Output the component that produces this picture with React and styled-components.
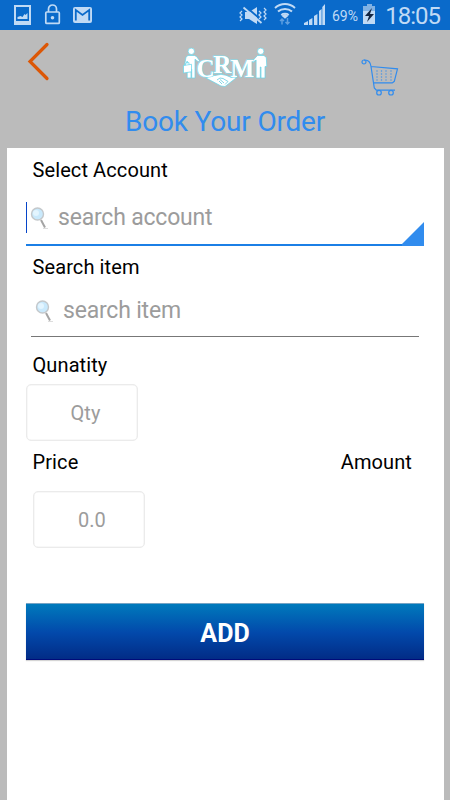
import React from 'react';
import styled, { createGlobalStyle } from 'styled-components';

const GlobalStyle = createGlobalStyle`
  * { box-sizing: border-box; }
  body { margin: 0; background: #bbbbbb; font-family: Roboto, sans-serif; }
`;

const Screen = styled.div`
  width: 450px;
  height: 800px;
  overflow: hidden;
  display: flex;
  flex-direction: column;
  background: #bbbbbb;
`;

const StatusBar = styled.div`
  height: 30px;
  flex: none;
  display: flex;
  justify-content: space-between;
  background: #0a6aca;
  color: #c0daf5;
`;

const StatusIcons = styled.svg`
  display: block;
  width: ${(p) => p.$width}px;
  height: 30px;
`;

const StatusGroup = styled.div`
  display: flex;
  align-items: flex-start;
  padding-right: 10px;
`;

const StatusText = styled.span`
  font-size: ${(p) => p.$size}px;
  line-height: 32px;
  width: ${(p) => p.$width}px;
  letter-spacing: ${(p) => p.$spacing || 0}px;
  white-space: nowrap;
`;

const ClockText = styled(StatusText)`
  text-align: right;
  line-height: 33px;
`;

const Header = styled.header`
  height: 75px;
  flex: none;
  display: flex;
  justify-content: space-between;
  padding: 10px 51px 0 26px;
`;

const HeaderIcon = styled.svg`
  display: block;
  flex: none;
  margin-top: ${(p) => p.$drop || 0}px;
  margin-left: ${(p) => p.$indent || 0}px;
`;

const Title = styled.h1`
  margin: 0;
  height: 43px;
  flex: none;
  font-size: 28px;
  line-height: 33px;
  font-weight: 400;
  text-align: center;
  color: #318cee;
  letter-spacing: -0.18px;
`;

const Panel = styled.main`
  flex: 1;
  margin: 0 6.5px 0 6.5px;
  padding: 10px 19.5px 0;
  background: #fff;
`;

const Label = styled.div`
  padding: 0 12px 0 6.5px;
  display: flex;
  justify-content: space-between;
  font-size: 20px;
  line-height: 24px;
  color: #000;
  letter-spacing: 0.1px;
`;

const SearchField = styled.div`
  position: relative;
  display: flex;
  height: ${(p) => p.$height}px;
  margin: ${(p) => p.$margin};
  border-bottom: ${(p) => (p.$active ? '2px solid #1b7fe6' : '1px solid #777')};
  font-size: 23px;
  line-height: 28px;
  letter-spacing: -0.2px;
  color: #9c9c9c;
`;

const Caret = styled.span`
  position: absolute;
  left: 0;
  top: -2px;
  width: 1px;
  height: 31px;
  background: #0645c9;
`;

const Corner = styled.span`
  position: absolute;
  right: 0;
  bottom: -2px;
  width: 22px;
  height: 24px;
  background: #318cee;
  clip-path: polygon(100% 0, 100% 100%, 0 100%, 0 92%);
`;

const Lens = styled.svg`
  flex: none;
  width: 20px;
  height: 25px;
  margin: 2px 8px 0 4px;
`;

const NumberBox = styled.div`
  width: 112px;
  height: 57px;
  margin: ${(p) => p.$margin};
  padding-left: 7px;
  border: 1.5px solid #ebebeb;
  box-shadow: inset 0 0 0 0.5px #f1f1f1;
  border-radius: 5px;
  font-size: 20px;
  line-height: 56px;
  text-align: center;
  color: #9c9c9c;
`;

const AddButton = styled.button`
  display: block;
  width: 398px;
  height: 57px;
  margin: 55px 0 0;
  padding: 2px 0 0;
  border: 0;
  border-top: 1px solid #75a3c5;
  border-bottom: 1px solid #000b7a;
  background: linear-gradient(#007abc, #0249ab 52%, #022c86);
  box-shadow: 0 1px 1px #d5d5d5;
  color: #fff;
  font: 700 25px/55px Roboto, sans-serif;
`;

function LeftStatus() {
  return (
    <StatusIcons $width={100} viewBox="0 0 100 30" fill="none" stroke="#c0daf5">
      <path d="M15 6h15v18H15z" strokeWidth="2" />
      <path d="M17.5 19v-2l3-1 2 1 2-3 1 1 2-2v6z" fill="#c0daf5" stroke="none" />
      <path d="M14 21h17v3H14z" fill="#c0daf5" stroke="none" />
      <rect x="45.8" y="12" width="13.5" height="11.4" rx="1" strokeWidth="1.7" />
      <path d="M48.5 12V9a4 4 0 0 1 8 0v3" strokeWidth="1.7" />
      <circle cx="52.5" cy="17.8" r="1.8" fill="#c0daf5" stroke="none" />
      <rect x="73" y="7" width="19" height="16" rx="2" fill="#c0daf5" stroke="none" />
      <path d="M75.8 20.5V10l6.7 5 6.7-5v10.5" stroke="#0a6aca" strokeWidth="1.8" />
    </StatusIcons>
  );
}

function RightStatus() {
  return (
    <StatusIcons $width={94} viewBox="238 0 94 30" fill="none" stroke="#c0daf5">
      <path d="M245 12h4l8-5v17l-8-5h-4z" fill="#c0daf5" stroke="none" />
      <path d="M245 6 263 21.5" stroke="#0a6aca" strokeWidth="2" />
      <path d="m243.5 7.5 18 15.5" strokeWidth="1.8" />
      <path d="m242 11-2 2 2 2-2 2 2 2-2 2M259 11l2 2-2 2 2 2-2 2M264 8l2 2-2 2 2 2-2 2 2 2-2 2" strokeWidth="1.2" />
      <path d="M275 8c6-5.2 14-5.2 20 0M278 11.6c4-3.5 10-3.5 14 0M281.3 15c2-1.6 5.4-1.6 7.4 0" strokeWidth="2" />
      <path d="m281.5 15.8 3.5-2 3.5 2-3.5 3z" fill="#c0daf5" stroke="none" />
      <path d="M282 24.5V19m-2 2 2-2 2 2M287.5 18v6m-2-2 2 2 2-2" stroke="#5e9fe1" strokeWidth="1.5" />
      <path d="M304 25v-2l4-2v4zM309 25v-5l3.4-2v7zM314 25v-9l3.4-2v11zM319 25V11l2.6-2v16zM322.3 25V7l2.7-3v21z" fill="#c0daf5" stroke="none" />
    </StatusIcons>
  );
}

function Battery() {
  return (
    <StatusIcons $width={15} viewBox="0 0 15 30">
      <path d="M5 4h5v2h3v18H1V6h4z" fill="#c0daf5" />
      <path d="M1 6h4V4h5v2h3v5H1z" fill="#81b2e4" />
      <path d="m10 8-7 8h4l-2 6 7-8H8z" fill="#142642" />
    </StatusIcons>
  );
}

const LogoText = styled.text`
  font: 700 25px "Liberation Serif", serif;
  fill: #fff;
  stroke: #7edff0;
  stroke-width: 1.2px;
  paint-order: stroke;
`;

function Logo() {
  return (
    <HeaderIcon $drop={7} $indent={36} width="86" height="41" viewBox="0 0 86 41">
      <g fill="#fff" stroke="#62d5eb" strokeWidth="0.7" strokeLinejoin="round">
        <circle cx="9.3" cy="4.3" r="3.2" />
        <path d="M6 8.5h6.5l2 1 3 4-1.3 1.2-3.2-2.5V31H9.7v-9H9v9H5.2V14L4 18.5H2.5L4 10z" />
        <path d="m1.5 18.5 8-1.2v7.5l-8 1.2zM3.5 18.2v-2l3.5-.6v2" />
        <circle cx="78.7" cy="4.3" r="3.2" />
        <path d="M75.5 8.5h6.5l2.3 2 .5 9h-1.8v11.5h-4V20h-.7v11h-4.2V13l-3 2.5-.8-1.5z" />
        <path d="m24 31 5-3 4 .5 6-1.2 5 1 5.5 2.2 4.5-2v2.5L43 39.5l-4-.5z" />
      </g>
      <LogoText x="14.5 31.2 48.5" y="29.8 26 29.8">CRM</LogoText>
      <path d="m35 33 3-2 3 .5 5 3-3 3m-5-5 4 3.5m-5-2 3 3" fill="none" stroke="#62cbe0" strokeWidth="0.8" />
    </HeaderIcon>
  );
}

function Cart() {
  return (
    <HeaderIcon $drop={19} width="38" height="38" viewBox="0 0 38 38" fill="none" stroke="#318cee" strokeWidth="1.2">
      <circle cx="3" cy="3" r="2" />
      <path d="M3 1.2c4.5-.5 6.5 2 7 6.3L13.3 29l2 2.2H34M10 7.5l26.5 2.3-3.2 12.5-2 1.6H13" />
      <path d="M16 11v12M20.5 11v12M25 11v12M30 11v12" strokeWidth="1.2" strokeDasharray="2 1" opacity=".55" />
      <circle cx="18" cy="33.7" r="2.3" />
      <circle cx="30" cy="33.7" r="2.3" />
    </HeaderIcon>
  );
}

function SearchIcon() {
  return (
    <Lens viewBox="0 0 20 25">
      <circle cx="7.5" cy="8" r="6" fill="#c9e9fc" stroke="#c4c8cb" strokeWidth="1.4" />
      <circle cx="6" cy="7" r="3" fill="#e3f5ff" />
      <path d="m11 14 4 7.5" stroke="#a4a4a4" strokeWidth="2" />
      <path d="M13 22.5h5" stroke="#ddd" strokeWidth="1" />
    </Lens>
  );
}

export default function App() {
  return (
    <>
      <GlobalStyle />
      <Screen>
        <StatusBar>
          <LeftStatus />
          <StatusGroup>
            <RightStatus />
            <StatusText $size={14} $width={30}>69%</StatusText>
            <Battery />
            <ClockText $size={24} $width={63} $spacing={-1}>18:05</ClockText>
          </StatusGroup>
        </StatusBar>
        <Header>
          <HeaderIcon width="26" height="44" viewBox="26 40 26 44">
            <path d="M47 44.5 30 61.5l17 17" fill="none" stroke="#dc5706" strokeWidth="3.2" strokeLinecap="round" />
          </HeaderIcon>
          <Logo />
          <Cart />
        </Header>
        <Title>Book Your Order</Title>
        <Panel>
          <Label>Select Account</Label>
          <SearchField $active $height={42} $margin="22px 0 9px">
            <Caret />
            <SearchIcon />
            <span>search account</span>
            <Corner />
          </SearchField>
          <Label>Search item</Label>
          <SearchField $height={40} $margin="18px 5px 16px">
            <SearchIcon />
            <span>search item</span>
          </SearchField>
          <Label>Qunatity</Label>
          <NumberBox $margin="7px 0 9px">Qty</NumberBox>
          <Label>
            <span>Price</span>
            <span>Amount</span>
          </Label>
          <NumberBox $margin="17px 0 0 6.5px">0.0</NumberBox>
          <AddButton>ADD</AddButton>
        </Panel>
      </Screen>
    </>
  );
}
